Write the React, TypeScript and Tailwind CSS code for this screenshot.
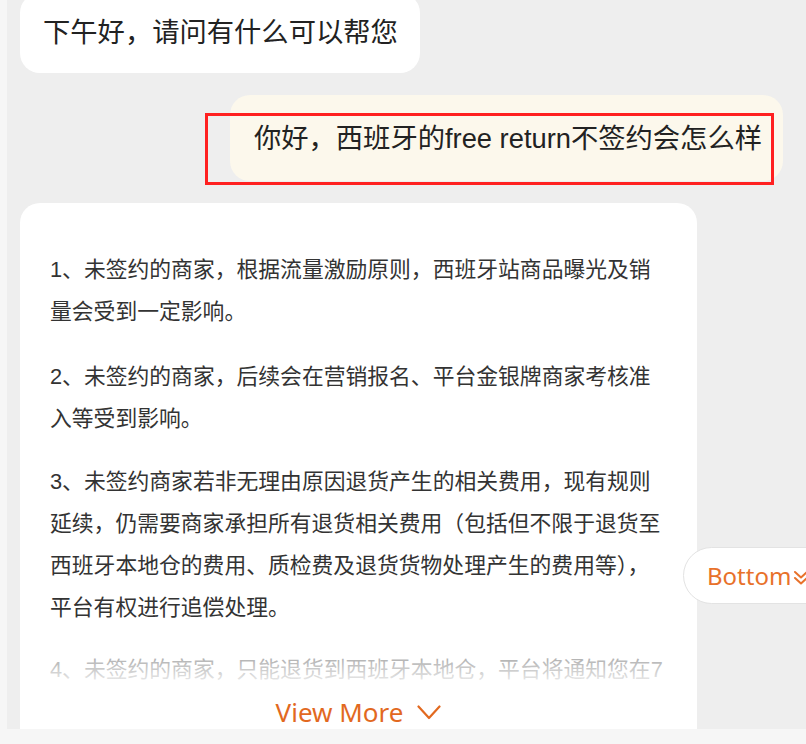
import React from "react";

const bodyFont = { fontFamily: '"Liberation Sans", "Noto Sans CJK SC", sans-serif' };

export default function App() {
  return (
    <div className="relative w-[806px] h-[744px] overflow-hidden bg-[#f6f6f6]">
      <div className="ml-[7px] h-[729px] overflow-hidden bg-[#eeeeee] pl-[13px] pr-[23px] flex flex-col">
        {/* bot greeting bubble */}
        <div
          className="self-start -mt-[7px] rounded-[20px] bg-white pl-[23px] pr-[22px] pt-[22px] pb-[22px] text-[27.3px] leading-[36px] text-[#222222]"
          style={bodyFont}
        >
          下午好，请问有什么可以帮您
        </div>

        {/* user bubble */}
        <div className="relative self-end mt-[22px]">
          <div
            className="rounded-[20px] bg-[#fcf8ec] pl-[24px] pr-[21px] pt-[26px] pb-[24px] text-[27.3px] leading-[36px] text-[#222222]"
            style={bodyFont}
          >
            你好，西班牙的free return不签约会怎么样
          </div>
          <div className="absolute left-[-25px] top-[18px] w-[569px] h-[72px] border-[3px] border-[#ff2020] pointer-events-none" />
        </div>

        {/* answer card */}
        <div className="mt-[22px] w-[677px] shrink-0 rounded-[20px] bg-white pt-[46px] px-[30px] pb-[24px]">
          <div
            className="relative h-[442px] overflow-hidden text-[21.8px] leading-[42px] text-[#333333]"
            style={bodyFont}
          >
            <p className="mb-[23px]">
              1、未签约的商家，根据流量激励原则，西班牙站商品曝光及销量会受到一定影响。
            </p>
            <p className="mb-[21px]">
              2、未签约的商家，后续会在营销报名、平台金银牌商家考核准入等受到影响。
            </p>
            <p className="mb-[20px]">
              3、未签约商家若非无理由原因退货产生的相关费用，现有规则延续，仍需要商家承担所有退货相关费用（包括但不限于退货至西班牙本地仓的费用、质检费及退货货物处理产生的费用等），平台有权进行追偿处理。
            </p>
            <p>4、未签约的商家，只能退货到西班牙本地仓，平台将通知您在7</p>
            <div className="absolute left-0 right-0 bottom-0 h-[52px] bg-linear-to-b from-white/40 to-white" />
          </div>
          <div
            className="flex items-center justify-center gap-[14px] h-[42px] text-[26px] text-[#e2691f]"
            style={{ fontFamily: '"Noto Sans", sans-serif' }}
          >
            <span>View More</span>
            <svg width="24" height="15" viewBox="0 0 24 15" fill="none">
              <polyline points="1.5,1.5 12,13 22.5,1.5" stroke="#e2691f" strokeWidth="2.2" strokeLinecap="round" strokeLinejoin="round" />
            </svg>
          </div>
        </div>
      </div>

      {/* floating Bottom button */}
      <div
        className="absolute left-[683px] top-[547px] h-[57px] w-[160px] rounded-l-full border border-[#e3e3e3] bg-white flex items-center pl-[23px] text-[24px] text-[#e8712a]"
        style={{ fontFamily: '"Noto Sans", sans-serif' }}
      >
        <span>Bottom</span>
        <svg width="18" height="18" viewBox="0 0 18 18" fill="none" className="ml-[1px] mt-[4px]">
          <polyline points="3,3 9,8.5 15,3" stroke="#e8712a" strokeWidth="2" strokeLinecap="round" strokeLinejoin="round" />
          <polyline points="3,9 9,14.5 15,9" stroke="#e8712a" strokeWidth="2" strokeLinecap="round" strokeLinejoin="round" />
        </svg>
      </div>
    </div>
  );
}
